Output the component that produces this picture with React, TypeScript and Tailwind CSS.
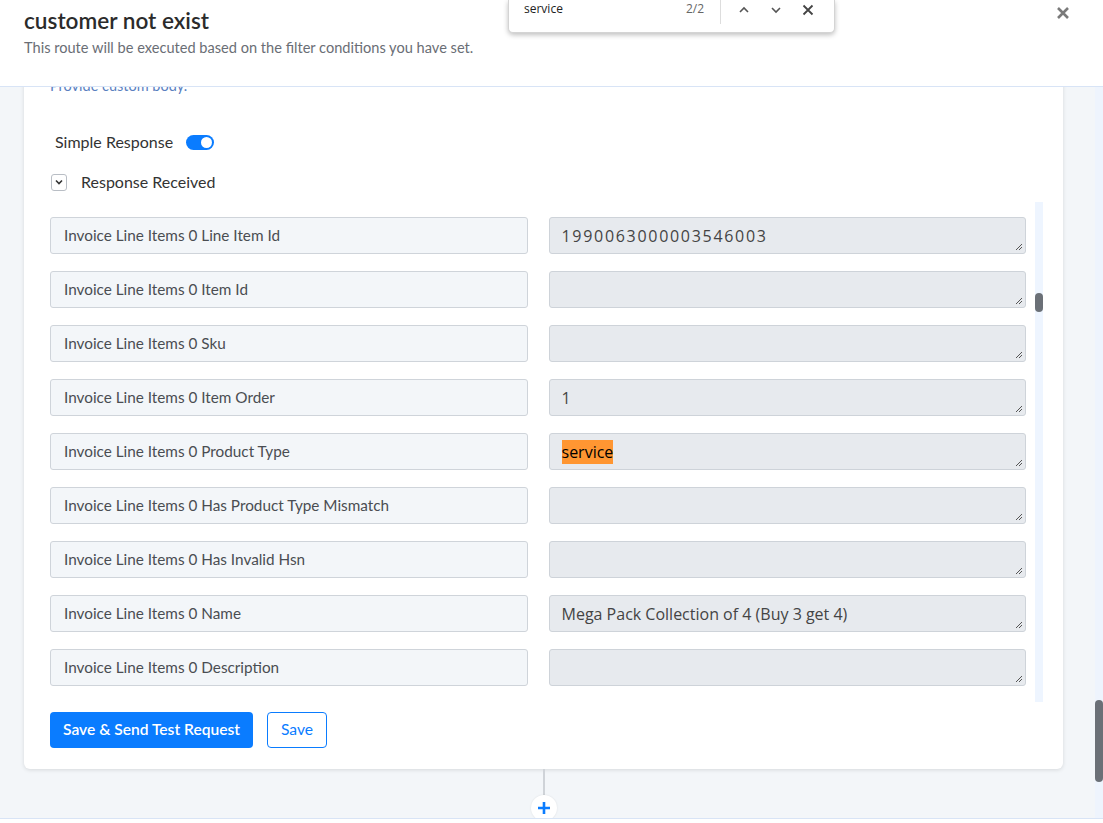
import React from 'react';

interface Field {
  label: string;
  value: string;
  hit?: boolean;
  numeric?: boolean;
}

const fields: Field[] = [
  { label: 'Invoice Line Items 0 Line Item Id', value: '1990063000003546003', numeric: true },
  { label: 'Invoice Line Items 0 Item Id', value: '' },
  { label: 'Invoice Line Items 0 Sku', value: '' },
  { label: 'Invoice Line Items 0 Item Order', value: '1' },
  { label: 'Invoice Line Items 0 Product Type', value: 'service', hit: true },
  { label: 'Invoice Line Items 0 Has Product Type Mismatch', value: '' },
  { label: 'Invoice Line Items 0 Has Invalid Hsn', value: '' },
  { label: 'Invoice Line Items 0 Name', value: 'Mega Pack Collection of 4 (Buy 3 get 4)' },
  { label: 'Invoice Line Items 0 Description', value: '' },
];

// little diagonal grip in the corner of a resizable field
function Grip() {
  return (
    <svg className="absolute right-[2px] bottom-[2px]" width="9" height="9" viewBox="0 0 9 9">
      <path d="M8 2 L2 8 M8 5 L5 8" stroke="#555" strokeWidth="1" />
    </svg>
  );
}

function FindBar() {
  return (
    <div className="absolute left-[508px] top-0 z-20 flex h-[33px] w-[327px] items-start rounded-b-[5px] border border-t-0 border-[#d4d4d4] bg-white font-['Open_Sans',sans-serif] shadow-[0_2px_5px_rgba(0,0,0,0.25)]">
      <span className="ml-[15px] text-[12px] leading-[18px] text-[#222]">service</span>
      <span className="ml-auto mr-[16px] text-[12px] leading-[18px] text-[#666]">2/2</span>
      <div className="h-[24px] w-px bg-[#ddd]" />
      <div className="flex w-[113px] items-center gap-[20px] pl-[17px] pt-[4px]">
        <svg width="12" height="10" viewBox="0 0 12 10">
          <path d="M2 7 L6 3 L10 7" fill="none" stroke="#555" strokeWidth="1.6" />
        </svg>
        <svg width="12" height="10" viewBox="0 0 12 10">
          <path d="M2 3 L6 7 L10 3" fill="none" stroke="#555" strokeWidth="1.6" />
        </svg>
        <svg width="12" height="12" viewBox="0 0 12 12">
          <path d="M1.5 1.5 L10.5 10.5 M10.5 1.5 L1.5 10.5" stroke="#444" strokeWidth="1.8" />
        </svg>
      </div>
    </div>
  );
}

export default function App() {
  return (
    <div className="relative flex h-[823px] w-full flex-col overflow-hidden bg-white font-['Lato',sans-serif]">
      <FindBar />

      {/* Route header */}
      <header className="relative z-10 h-[87px] shrink-0 border-b border-[#d8e4f6] bg-white px-6 pt-[7px]">
        <h1 className="text-[22.6px] font-semibold leading-[28px] text-[#2b2b2b]">customer not exist</h1>
        <p className="mt-[3px] text-[14.6px] leading-[20px] text-[#6a6e75]">This route will be executed based on the filter conditions you have set.</p>
        <button className="absolute right-[33px] top-[6px] text-[#777]">
          <svg width="14" height="14" viewBox="0 0 14 14">
            <path d="M2 2 L12 12 M12 2 L2 12" stroke="#7a7a7a" strokeWidth="2.6" />
          </svg>
        </button>
      </header>

      <div className="flex min-h-0 flex-1 border-b border-[#d8e4f6]">
        <main className="relative flex-1 overflow-hidden bg-[#f3f6f9] pl-6 pr-[32px]">
          <div className="-mt-[11px] rounded-[6px] bg-white pb-[21px] pl-[26px] pr-[20px] shadow-[0_1px_4px_rgba(0,0,0,0.12)]">
            <p className="text-[14.5px] leading-[20px] text-[#5a80c0]">Provide custom body.</p>

            <div className="mt-[34px] flex items-center pl-[5px]">
              <span className="text-[16px] text-[#333]">Simple Response</span>
              <span className="ml-[13px] flex h-[15px] w-[28px] items-center justify-end rounded-full bg-[#0a7cff] pr-[2px]">
                <span className="h-[11px] w-[11px] rounded-full bg-white" />
              </span>
            </div>

            <div className="mt-[16px] flex items-center pl-[1px]">
              <span className="flex h-[17px] w-[16px] items-center justify-center rounded-[3px] border border-[#b9bec5]">
                <svg width="8" height="6" viewBox="0 0 8 6">
                  <path d="M1 1.5 L4 4.5 L7 1.5" fill="none" stroke="#333" strokeWidth="1.6" />
                </svg>
              </span>
              <span className="ml-[14px] text-[16px] text-[#333]">Response Received</span>
            </div>

            {/* Response field list with its own scroll track */}
            <div className="mt-[8px] flex h-[500px] overflow-hidden">
              <div className="flex flex-1 flex-col gap-[17px] pr-[9px] pt-[15px]">
                {fields.map((f) => (
                  <div key={f.label} className="grid grid-cols-2 gap-[21px]">
                    <div className="flex h-[37px] items-center rounded-[3px] border border-[#cfd4da] bg-[#f3f6f9] px-[13px] text-[15.3px] text-[#4a4d52]">
                      {f.label}
                    </div>
                    <div className="relative flex h-[37px] items-center rounded-[3px] border border-[#ced3d9] bg-[#e7eaee] px-[12px] font-['Open_Sans',sans-serif] text-[16px] text-[#444]">
                      {f.hit ? (
                        <span className="bg-[#ff9632] text-black">{f.value}</span>
                      ) : (
                        <span className={f.numeric ? 'tracking-[1.7px]' : ''}>{f.value}</span>
                      )}
                      <Grip />
                    </div>
                  </div>
                ))}
              </div>
              <div className="relative w-[8px] bg-[#eef5ff]">
                <div className="absolute left-0 top-[91px] h-[19px] w-[8px] rounded-full bg-[#6b7077]" />
              </div>
            </div>

            <div className="mt-[10px] flex gap-[14px]">
              <button className="h-[36px] rounded-[4px] bg-[#0a7cff] px-[13px] text-[15.6px] font-semibold text-white">
                Save &amp; Send Test Request
              </button>
              <button className="h-[36px] rounded-[4px] border border-[#0a7cff] bg-white px-[13px] text-[15.6px] text-[#0a7cff]">
                Save
              </button>
            </div>
          </div>

          {/* connector down to the next step */}
          <div className="flex flex-col items-center">
            <div className="h-[26px] w-[2px] bg-[#cfd3d8]" />
            <div className="flex h-[26px] w-[26px] items-center justify-center rounded-full bg-white shadow-[0_0_2px_rgba(0,0,0,0.1)]">
              <svg width="14" height="14" viewBox="0 0 14 14">
                <path d="M7 1 V13 M1 7 H13" stroke="#0a7cff" strokeWidth="2.6" />
              </svg>
            </div>
          </div>
        </main>

        {/* page scrollbar */}
        <div className="relative w-[8px] bg-[#eef4fd]">
          <div className="absolute left-0 top-[613px] h-[82px] w-[8px] rounded-full bg-[#6b7077]" />
        </div>
      </div>
      <div className="h-[4px] shrink-0 bg-white" />
    </div>
  );
}
